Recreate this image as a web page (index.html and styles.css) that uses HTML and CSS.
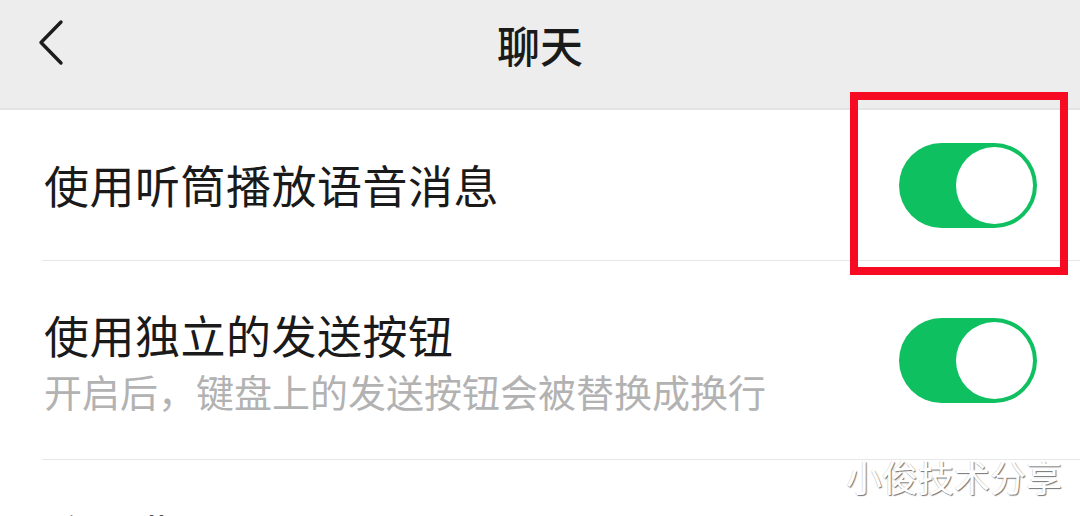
FILE: index.html
```html
<!DOCTYPE html>
<html lang="zh-CN">
<head>
  <meta charset="UTF-8" />
  <meta name="viewport" content="width=device-width, initial-scale=1.0"/>
  <title>聊天</title>
  <link rel="stylesheet" href="styles.css">
</head>
<body>
  <header class="topbar">
    <div class="back">
      <svg width="30" height="50" viewBox="0 0 30 50">
        <polyline points="23,3 3,23.5 23,44" fill="none" stroke="#1c1c1c" stroke-width="3.4" stroke-linecap="round" stroke-linejoin="round"/>
      </svg>
    </div>
    <h1 class="title">聊天</h1>
    <div></div>
  </header>

  <div class="list">
    <div class="cell">
      <div class="label">使用听筒播放语音消息</div>
      <div class="switch on"><span class="knob"></span></div>
    </div>

    <div class="cell tall">
      <div class="text">
        <div class="label">使用独立的发送按钮</div>
        <div class="desc">开启后，键盘上的发送按钮会被替换成换行</div>
      </div>
      <div class="switch on"><span class="knob"></span></div>
    </div>

    <div class="cell last">
      <div class="label">聊天背景</div>
    </div>
  </div>

  <div class="mark-box"></div>
  <div class="watermark">小俊技术分享</div>
</body>
</html>
```

FILE: styles.css
```css
html, body {
  margin: 0;
  padding: 0;
}
body {
  width: 1080px;
  height: 516px;
  overflow: hidden;
  position: relative;
  background: #fff;
  font-family: "Noto Sans CJK SC", "Noto Sans", sans-serif;
  color: #1a1a1a;
}
.topbar {
  height: 110px;
  box-sizing: border-box;
  padding-bottom: 20px;
  background: #ededed;
  border-bottom: 2px solid #e4e4e4;
  display: grid;
  grid-template-columns: 1fr auto 1fr;
  align-items: center;
}
.back {
  padding-left: 38px;
  display: flex;
  align-items: center;
}
.back svg {
  display: block;
}
.title {
  margin: 0;
  font-size: 43px;
  font-weight: 500;
  line-height: 88px;
  color: #1a1a1a;
}
.cell {
  margin-left: 42px;
  padding: 0 43px 0 2px;
  height: 150px;
  border-bottom: 1px solid #e7e7e7;
  display: flex;
  align-items: center;
  justify-content: space-between;
}
.cell.tall {
  height: 198px;
}
.cell.last {
  align-items: flex-start;
  padding-top: 47px;
  box-sizing: border-box;
}
.label {
  font-size: 45px;
  line-height: 56px;
  letter-spacing: 0.5px;
}
.text {
  padding-top: 6px;
}
.desc {
  font-size: 38px;
  line-height: 56px;
  color: #b2b2b2;
}
.switch {
  width: 138px;
  height: 85px;
  border-radius: 43px;
  background: #e5e5e5;
  box-sizing: border-box;
  padding: 4px;
  display: flex;
  justify-content: flex-start;
}
.switch.on {
  background: #0fc060;
  justify-content: flex-end;
}
.knob {
  width: 77px;
  height: 77px;
  border-radius: 50%;
  background: #fff;
}
.mark-box {
  position: absolute;
  left: 850px;
  top: 92px;
  width: 218px;
  height: 183px;
  box-sizing: border-box;
  border: 8px solid #f70b22;
}
.watermark {
  position: absolute;
  left: 846px;
  top: 452px;
  font-size: 36px;
  line-height: 48px;
  color: #fff;
  text-shadow: 1px 1px 1px rgba(0, 0, 0, 0.55), -1px 0 0 rgba(0, 0, 0, 0.12);
}
```
